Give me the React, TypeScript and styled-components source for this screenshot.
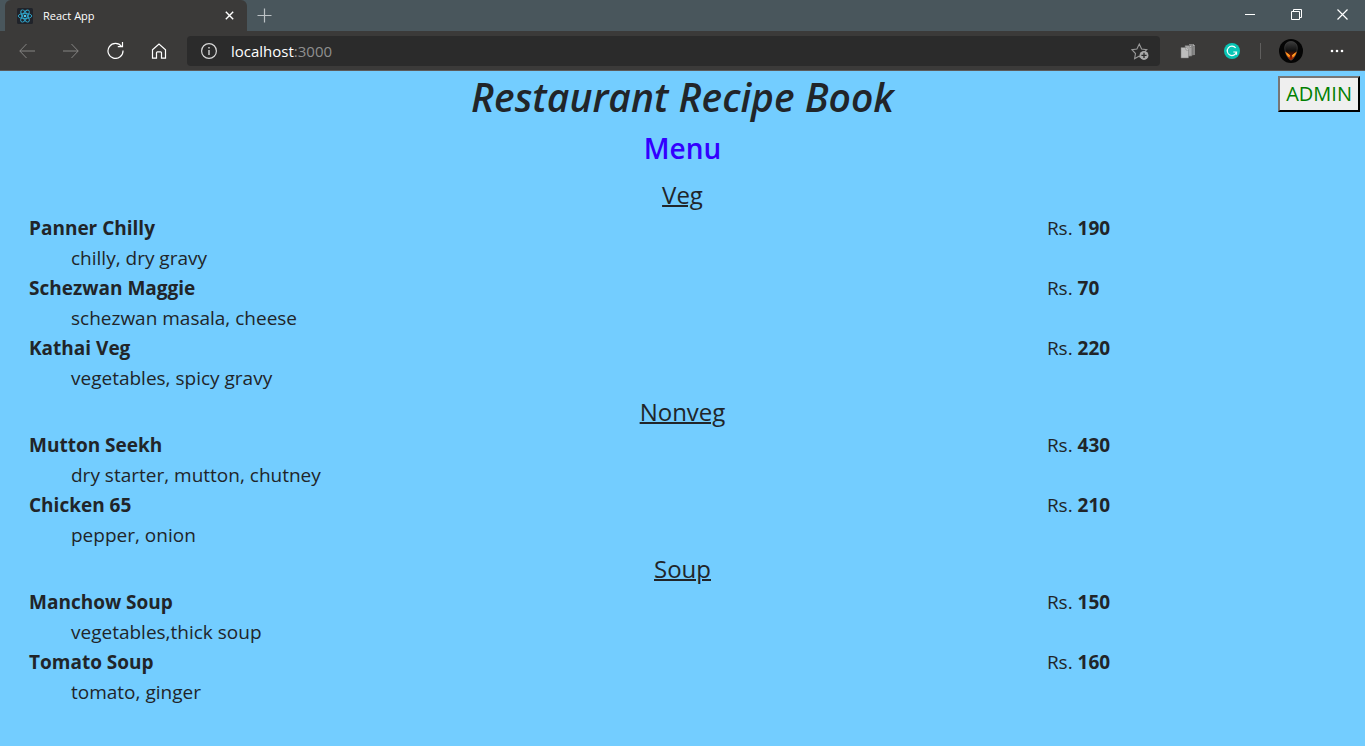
import React from "react";
import styled, { createGlobalStyle } from "styled-components";

const GlobalStyle = createGlobalStyle`
  * { box-sizing: border-box; }
  body {
    margin: 0;
    background: #73cdff;
    color: #212529;
    font-family: "Segoe UI", "Open Sans", "Noto Sans", sans-serif;
  }
`;

const TitleBar = styled.header`
  display: flex;
  height: 31px;
  padding-left: 5px;
  background: #49565c;
  color: #fff;
`;

const Tab = styled.div`
  display: flex;
  align-items: center;
  width: 242px;
  padding: 0 10px 0 12px;
  border-radius: 6px 6px 0 0;
  background: #3b3a39;
  font-size: 11px;
`;

const TabTitle = styled.span`
  flex: 1;
  padding-left: 10px;
`;

const IconButton = styled.button<{ $width?: number }>`
  display: flex;
  align-items: center;
  justify-content: center;
  flex: none;
  width: ${(p) => p.$width ?? 44}px;
  height: 100%;
  padding: 0;
  border: 0;
  background: none;
  color: inherit;
`;

const WindowControls = styled.div`
  display: flex;
  margin-left: auto;
  padding-bottom: 2px;
`;

const Toolbar = styled.nav`
  display: flex;
  align-items: center;
  height: 40px;
  padding: 0 6px 0 5px;
  border-bottom: 1px solid #5c5b5a;
  background: #3b3a39;
  color: #fff;
`;

const AddressBar = styled.div`
  display: flex;
  align-items: center;
  flex: 1;
  height: 30px;
  margin: 0 6px;
  padding: 0 0 0 14px;
  border-radius: 4px;
  background: #2b2b2b;
`;

const Address = styled.div`
  flex: 1;
  padding-left: 14px;
  font-size: 15px;
  line-height: 20px;
`;

const Port = styled.span`
  color: #8f8f8f;
`;

const Divider = styled.span`
  width: 1px;
  height: 16px;
  margin: 0 6px;
  background: #605f5e;
`;

const Page = styled.main`
  position: relative;
  padding: 2px 0 36px;
`;

const Title = styled.h1`
  margin: 0 0 9px;
  font-size: 39px;
  font-style: italic;
  font-weight: 600;
  line-height: 48px;
  text-align: center;
`;

const MenuTitle = styled.h2`
  margin: 0 0 10px;
  color: #3300ff;
  font-size: 28px;
  font-weight: 600;
  line-height: 36px;
  text-align: center;
`;

const AdminButton = styled.button`
  position: absolute;
  top: 5px;
  right: 5px;
  height: 36px;
  padding: 0 6px;
  border: 2px outset #767676;
  border-color: #767676 #212121 #212121 #767676;
  background: #efefef;
  color: #008000;
  font-family: inherit;
  font-size: 20px;
  line-height: 30px;
`;

const SectionTitle = styled.h3`
  margin: 0;
  font-size: 24px;
  font-weight: 400;
  line-height: 37px;
  text-align: center;
  text-decoration: underline;
  text-decoration-thickness: 2px;
`;

const DishList = styled.ul`
  margin: 0;
  padding: 0 0 0 29px;
  list-style: none;
`;

const Dish = styled.li`
  display: grid;
  grid-template-columns: 16fr 5fr;
  font-size: 19px;
  line-height: 30px;
`;

const Strong = styled.strong`
  font-weight: 700;
`;

const Ingredients = styled.span`
  grid-column: 1 / -1;
  padding-left: 42px;
`;

const sections = [
  {
    name: "Veg",
    dishes: [
      { name: "Panner Chilly", price: 190, ingredients: "chilly, dry gravy" },
      { name: "Schezwan Maggie", price: 70, ingredients: "schezwan masala, cheese" },
      { name: "Kathai Veg", price: 220, ingredients: "vegetables, spicy gravy" },
    ],
  },
  {
    name: "Nonveg",
    dishes: [
      { name: "Mutton Seekh", price: 430, ingredients: "dry starter, mutton, chutney" },
      { name: "Chicken 65", price: 210, ingredients: "pepper, onion" },
    ],
  },
  {
    name: "Soup",
    dishes: [
      { name: "Manchow Soup", price: 150, ingredients: "vegetables,thick soup" },
      { name: "Tomato Soup", price: 160, ingredients: "tomato, ginger" },
    ],
  },
];

const Stroke = ({ size, d, color = "currentColor", width = 1 }: { size: number; d: string; color?: string; width?: number }) => (
  <svg width={size} height={size} viewBox={`0 0 ${size} ${size}`} fill="none" stroke={color} strokeWidth={width} aria-hidden="true">
    <path d={d} />
  </svg>
);

const ReactLogo = () => (
  <svg width="16" height="16" viewBox="0 0 16 16" fill="none" stroke="#2fa9d0" strokeWidth="0.9" aria-hidden="true">
    <rect width="16" height="16" rx="1.5" fill="#20232a" stroke="none" />
    <ellipse cx="8" cy="8" rx="6.8" ry="2.6" />
    <ellipse cx="8" cy="8" rx="6.8" ry="2.6" transform="rotate(60 8 8)" />
    <ellipse cx="8" cy="8" rx="6.8" ry="2.6" transform="rotate(120 8 8)" />
    <circle cx="8" cy="8" r="1.3" fill="#4cc8ee" stroke="none" />
  </svg>
);

const InfoIcon = () => (
  <svg width="16" height="16" viewBox="0 0 16 16" fill="none" stroke="#d8d8d8" aria-hidden="true">
    <circle cx="8" cy="8" r="7.4" strokeWidth="1.2" />
    <path d="M8 7v5M8 4v1.6" strokeWidth="1.4" />
  </svg>
);

const FavoriteIcon = () => (
  <svg width="18" height="18" viewBox="0 0 18 18" fill="none" aria-hidden="true">
    <path d="M9 15l-1-.8-4.4 2.5.9-5.2L.9 7.7l5-.7L8.3 2l2.3 5 5.2.7-2 2" stroke="#999" strokeWidth="1.1" />
    <circle cx="13" cy="13.4" r="4.5" fill="#aaa" />
    <path d="M13 10.8V16M10.4 13.4h5.2" stroke="#2b2b2b" strokeWidth="1.3" />
  </svg>
);

const PagesIcon = () => (
  <svg width="16" height="16" viewBox="0 0 16 16" aria-hidden="true">
    <path d="M9 1h4l2 2v9l-6 .5z" fill="#858585" />
    <path d="M5 2.500h5l2 2V13l-7 .5z" fill="#a5a5a5" stroke="#666" strokeWidth=".6" />
    <path d="M1 4.500h5l2.500 2.500V15H1z" fill="#bdbdbd" stroke="#777" strokeWidth=".5" />
    <path d="M6 4.500V7h2.500M10 2.500v2h2M13 1v2h2" fill="#e4e4e4" stroke="#666" strokeWidth=".5" />
  </svg>
);

const GrammarIcon = () => (
  <svg width="16" height="16" viewBox="0 0 16 16" fill="none" aria-hidden="true">
    <circle cx="8" cy="8" r="8" fill="#08c5b5" />
    <path d="M11.700 5A4.700 4.700 0 1 0 12.500 9H9.300M12.500 9v2.800" stroke="#fff" strokeWidth="1.200" />
  </svg>
);

const AvatarIcon = () => (
  <svg width="24" height="24" viewBox="0 0 24 24" aria-hidden="true">
    <defs>
      <linearGradient id="head" x1="0" y1="0" x2="0" y2="1">
        <stop offset="0" stopColor="#3c3c3c" />
        <stop offset="0.5" stopColor="#111" />
        <stop offset="0.7" stopColor="#5a1400" />
        <stop offset="1" stopColor="#b32a00" />
      </linearGradient>
    </defs>
    <circle cx="12" cy="12" r="12" fill="#050505" />
    <path d="M12 2.500c4 0 6.300 2.700 6.300 6.300 0 5-3.800 12.400-6.300 12.400S5.700 13.800 5.700 8.800c0-3.600 2.300-6.300 6.300-6.300z" fill="url(#head)" stroke="#484848" strokeWidth=".6" />
    <path d="M6.300 12.500l4.700 3.700-.4 2.500c-2.200-.5-3.700-3-4.300-6.200zM17.700 12.500 13 16.200l.4 2.500c2.200-.5 3.700-3 4.300-6.200z" fill="#ff8014" />
    <path d="M8 14.800l2.500 1.700M16 14.800l-2.500 1.700" stroke="#ffd040" strokeWidth=".7" />
  </svg>
);

const MoreIcon = () => (
  <svg width="14" height="4" viewBox="0 0 14 4" fill="currentColor" aria-hidden="true">
    <circle cx="2" cy="2" r="1.300" />
    <circle cx="7" cy="2" r="1.300" />
    <circle cx="12" cy="2" r="1.300" />
  </svg>
);

export default function App() {
  return (
    <>
      <GlobalStyle />
      <TitleBar>
        <Tab>
          <ReactLogo />
          <TabTitle>React App</TabTitle>
          <IconButton $width={16} aria-label="Close tab">
            <Stroke size={9} d="M.8.8l7.400 7.400M8.200.8.8 8.200" width={1.4} />
          </IconButton>
        </Tab>
        <IconButton $width={34} aria-label="New tab">
          <Stroke size={15} d="M7.500.5v14M.5 7.500h14" color="#bcc2c5" width={1.2} />
        </IconButton>
        <WindowControls>
          <IconButton $width={46} aria-label="Minimize">
            <Stroke size={11} d="M0 5.500h10" />
          </IconButton>
          <IconButton $width={46} aria-label="Restore">
            <Stroke size={11} d="M.5 2.500h8v8h-8zM2.500 2.500v-2h8v8h-2" />
          </IconButton>
          <IconButton $width={46} aria-label="Close">
            <Stroke size={11} d="M.5.5l10 10M10.500.5l-10 10" width={1.2} />
          </IconButton>
        </WindowControls>
      </TitleBar>
      <Toolbar>
        <IconButton aria-label="Back">
          <Stroke size={16} d="M16 8H.8M7.500 1 .8 8l6.700 7" color="#858483" />
        </IconButton>
        <IconButton aria-label="Forward">
          <Stroke size={16} d="M0 8h15.200M8.500 1l6.700 7-6.700 7" color="#858483" />
        </IconButton>
        <IconButton aria-label="Refresh">
          <Stroke size={17} d="M14.600 4.500A7.500 7.500 0 1 0 16 8.500M15.500 0v4.700h-4.700" width={1.2} />
        </IconButton>
        <IconButton aria-label="Home">
          <Stroke size={16} d="M1.500 6.800 8 1l6.500 5.800v8.400h-4V9.700q0-.9-.9-.9H6.400q-.9 0-.9.900v5.500h-4z" width={1.200} />
        </IconButton>
        <AddressBar>
          <InfoIcon />
          <Address>
            localhost<Port>:3000</Port>
          </Address>
          <IconButton $width={40} aria-label="Add to favorites">
            <FavoriteIcon />
          </IconButton>
        </AddressBar>
        <IconButton aria-label="Pages">
          <PagesIcon />
        </IconButton>
        <IconButton aria-label="Grammar">
          <GrammarIcon />
        </IconButton>
        <Divider />
        <IconButton $width={48} aria-label="Profile">
          <AvatarIcon />
        </IconButton>
        <IconButton aria-label="More">
          <MoreIcon />
        </IconButton>
      </Toolbar>
      <Page>
        <Title>Restaurant Recipe Book</Title>
        <AdminButton>ADMIN</AdminButton>
        <MenuTitle>Menu</MenuTitle>
        {sections.map((section) => (
          <section key={section.name}>
            <SectionTitle>{section.name}</SectionTitle>
            <DishList>
              {section.dishes.map((dish) => (
                <Dish key={dish.name}>
                  <Strong>{dish.name}</Strong>
                  <span>
                    Rs. <Strong>{dish.price}</Strong>
                  </span>
                  <Ingredients>{dish.ingredients}</Ingredients>
                </Dish>
              ))}
            </DishList>
          </section>
        ))}
      </Page>
    </>
  );
}
